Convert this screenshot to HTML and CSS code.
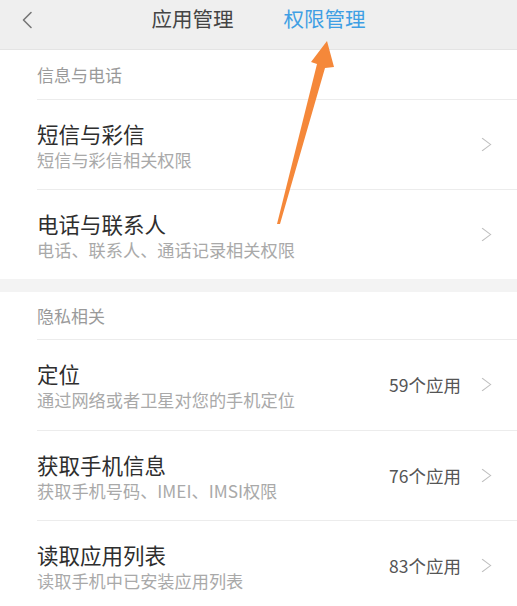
FILE: index.html
```html
<!DOCTYPE html>
<html lang="zh-CN">
<head>
<meta charset="utf-8">
<title>权限管理</title>
<link rel="stylesheet" href="styles.css">
</head>
<body>
<div class="page">
  <header class="topbar">
    <span class="back">
      <svg width="12" height="18" viewBox="0 0 12 18"><path d="M10 1.5 L2.5 9 L10 16.5" fill="none" stroke="#777" stroke-width="1.6" stroke-linecap="round" stroke-linejoin="round"/></svg>
    </span>
    <nav class="tabs">
      <span class="tab">应用管理</span>
      <span class="tab active">权限管理</span>
    </nav>
  </header>

  <section class="group">
    <div class="group-title first">信息与电话</div>
    <div class="row">
      <div class="texts">
        <div class="title">短信与彩信</div>
        <div class="sub">短信与彩信相关权限</div>
      </div>
      <div class="right"><span class="chev"></span></div>
    </div>
    <div class="row">
      <div class="texts">
        <div class="title">电话与联系人</div>
        <div class="sub">电话、联系人、通话记录相关权限</div>
      </div>
      <div class="right"><span class="chev"></span></div>
    </div>
  </section>

  <div class="band"></div>

  <section class="group">
    <div class="group-title">隐私相关</div>
    <div class="row tall">
      <div class="texts">
        <div class="title">定位</div>
        <div class="sub">通过网络或者卫星对您的手机定位</div>
      </div>
      <div class="right"><span class="count">59个应用</span><span class="chev"></span></div>
    </div>
    <div class="row tall">
      <div class="texts">
        <div class="title">获取手机信息</div>
        <div class="sub">获取手机号码、IMEI、IMSI权限</div>
      </div>
      <div class="right"><span class="count">76个应用</span><span class="chev"></span></div>
    </div>
    <div class="row tall">
      <div class="texts">
        <div class="title">读取应用列表</div>
        <div class="sub">读取手机中已安装应用列表</div>
      </div>
      <div class="right"><span class="count">83个应用</span><span class="chev"></span></div>
    </div>
  </section>

  <svg class="arrow" width="517" height="606" viewBox="0 0 517 606">
    <polygon points="327,41 311,62 317,64 277,224 280,224 325,68 334,67" fill="#f5883a"/>
  </svg>
</div>
</body>
</html>
```

FILE: styles.css
```css
* { box-sizing: border-box; margin: 0; padding: 0; }
html, body { background: #fff; }
body {
  margin: 0;
  font-family: "Noto Sans CJK SC", "Noto Sans", sans-serif;
  overflow: hidden;
}
.page {
  position: relative;
  width: 517px;
  height: 606px;
  overflow: hidden;
  background: #fff;
}
.topbar {
  position: relative;
  height: 50px;
  background: #efefef;
  border-bottom: 1px solid #e4e4e4;
  padding-bottom: 13px;
}
.back {
  position: absolute;
  left: 21px;
  top: 11px;
  display: flex;
}
.tabs {
  display: flex;
  justify-content: center;
  align-items: center;
  gap: 50px;
  height: 36px;
}
.tab {
  font-size: 20.5px;
  line-height: 36px;
  color: #444;
}
.tab.active { color: #3f9fe4; }

.group-title {
  height: 47px;
  line-height: 47px;
  padding-left: 37px;
  font-size: 17px;
  color: #9a9a9a;
}
.group-title.first {
  height: 49px;
  line-height: 50px;
}
.row {
  display: flex;
  align-items: center;
  margin-left: 37px;
  height: 90px;
  border-top: 1px solid #ececec;
  padding-right: 26px;
}
.row.tall { height: 90.5px; }
.texts {
  flex: 1;
  display: flex;
  flex-direction: column;
  padding-top: 3px;
}
.title {
  font-size: 21.5px;
  line-height: 26px;
  color: #2e2e2e;
}
.sub {
  font-size: 17.2px;
  line-height: 22px;
  margin-top: 2px;
  color: #a9a9a9;
}
.right {
  display: flex;
  align-items: center;
  gap: 16px;
}
.count {
  font-size: 17.5px;
  color: #555;
}
.chev {
  width: 11px;
  height: 11px;
  border-top: 1.5px solid #bdbdbd;
  border-right: 1.5px solid #bdbdbd;
  transform: rotate(45deg) skew(-8deg, -8deg);
  margin-right: 3px;
}
.band {
  height: 13px;
  background: #f3f3f3;
}
.arrow {
  position: absolute;
  left: 0;
  top: 0;
  pointer-events: none;
}
```
